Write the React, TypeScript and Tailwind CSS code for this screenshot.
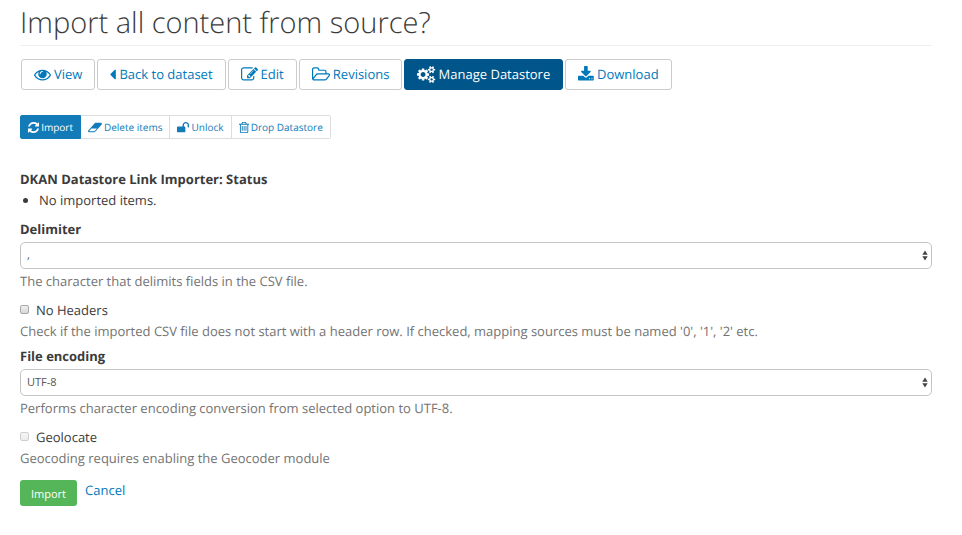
import type { ReactNode } from "react";

const icons = {
  eye: {
    box: "0 0 1792 1792",
    d: "M1664 960q-152-236-381-353 61 104 61 225 0 185-131.5 316.5t-316.5 131.5-316.5-131.5-131.5-316.5q0-121 61-225-229 117-381 353 133 205 333.5 326.5t434.5 121.5 434.5-121.5 333.5-326.5zm-720-384q0-20-14-34t-34-14q-125 0-214.5 89.5t-89.5 214.5q0 20 14 34t34 14 34-14 14-34q0-86 61-147t147-61q20 0 34-14t14-34zm848 384q0 34-20 69-140 230-376.5 368.5t-499.5 138.5-499.5-139-376.5-368q-20-35-20-69t20-69q140-229 376.5-368t499.5-139 499.5 139 376.5 368q20 35 20 69z",
  },
  caret: {
    box: "600 0 640 1792",
    d: "M1216 448v896q0 26-19 45t-45 19-45-19l-448-448q-19-19-19-45t19-45l448-448q19-19 45-19t45 19 19 45z",
  },
  edit: {
    box: "0 0 1792 1792",
    d: "M888 1184l116-116-152-152-116 116v56h96v96h56zm440-720q-16-16-33 1l-350 350q-17 17-1 33t33-1l350-350q17-17 1-33zm80 594v190q0 119-84.5 203.5t-203.5 84.5h-832q-119 0-203.5-84.5t-84.5-203.5v-832q0-119 84.5-203.5t203.5-84.5h832q63 0 117 25 15 7 18 23 3 17-9 29l-49 49q-14 14-32 8-23-6-45-6h-832q-66 0-113 47t-47 113v832q0 66 47 113t113 47h832q66 0 113-47t47-113v-126q0-13 9-22l64-64q15-15 35-7t20 29zm-96-738l288 288-672 672h-288v-288zm444 132l-92 92-288-288 92-92q28-28 68-28t68 28l152 152q28 28 28 68t-28 68z",
  },
  folder: {
    box: "-64 0 1920 1792",
    d: "M1717 931q0-35-53-35h-1088q-40 0-85.5 21.5t-71.5 52.5l-294 363q-18 24-18 40 0 35 53 35h1088q40 0 86-22t71-53l294-363q18-22 18-39zm-1141-163h768v-160q0-40-28-68t-68-28h-576q-40 0-68-28t-28-68v-64q0-40-28-68t-68-28h-320q-40 0-68 28t-28 68v853l256-315q44-53 116-87.5t140-34.5zm1269 163q0 62-46 120l-295 363q-43 53-116 87.5t-140 34.5h-1088q-92 0-158-66t-66-158v-960q0-92 66-158t158-66h320q92 0 158 66t66 158v32h544q92 0 158 66t66 158v160h192q54 0 99 24.5t67 70.5q15 32 15 68z",
  },
  cogs: {
    box: "0 0 1920 1792",
    d: "M896 896q0-106-75-181t-181-75-181 75-75 181 75 181 181 75 181-75 75-181zm768 512q0-52-38-90t-90-38-90 38-38 90q0 53 37.5 90.5t90.5 37.5 90.5-37.5 37.5-90.5zm0-1024q0-52-38-90t-90-38-90 38-38 90q0 53 37.5 90.5t90.5 37.5 90.5-37.5 37.5-90.5zm-384 421v185q0 10-7 19.5t-16 10.5l-155 24q-11 35-32 76 34 48 90 115 7 11 7 20 0 12-7 19-23 30-82.5 89.5t-78.5 59.5q-11 0-21-7l-115-90q-37 19-77 31-11 108-23 155-7 24-30 24h-186q-11 0-20-7.5t-10-17.5l-23-153q-34-10-75-31l-118 89q-7 7-20 7-11 0-21-8-144-133-144-160 0-9 7-19 10-14 41-53t47-61q-23-44-35-82l-152-24q-10-1-17-9.5t-7-19.5v-185q0-10 7-19.5t16-10.5l155-24q11-35 32-76-34-48-90-115-7-11-7-20 0-12 7-20 22-30 82-89t79-59q11 0 21 7l115 90q34-18 77-32 11-108 23-154 7-24 30-24h186q11 0 20 7.5t10 17.5l23 153q34 10 75 31l118-89q8-7 20-7 11 0 21 8 144 133 144 160 0 8-7 19-12 16-42 54t-45 60q23 48 34 82l152 23q10 2 17 10.5t7 19.5zm640 533v140q0 16-149 31-12 27-30 52 51 113 51 138 0 4-4 7-122 71-124 71-8 0-46-47t-52-68q-20 2-30 2t-30-2q-14 21-52 68t-46 47q-2 0-124-71-4-3-4-7 0-25 51-138-18-25-30-52-149-15-149-31v-140q0-16 149-31 13-29 30-52-51-113-51-138 0-4 4-7 4-2 35-20t59-34 30-16q8 0 46 46.5t52 67.5q20-2 30-2t30 2q51-71 92-112l6-2q4 0 124 70 4 3 4 7 0 25-51 138 17 23 30 52 149 15 149 31zm0-1024v140q0 16-149 31-12 27-30 52 51 113 51 138 0 4-4 7-122 71-124 71-8 0-46-47t-52-68q-20 2-30 2t-30-2q-14 21-52 68t-46 47q-2 0-124-71-4-3-4-7 0-25 51-138-18-25-30-52-149-15-149-31v-140q0-16 149-31 13-29 30-52-51-113-51-138 0-4 4-7 4-2 35-20t59-34 30-16q8 0 46 46.5t52 67.5q20-2 30-2t30 2q51-71 92-112l6-2q4 0 124 70 4 3 4 7 0 25-51 138 17 23 30 52 149 15 149 31z",
  },
  download: {
    box: "64 0 1664 1792",
    d: "M1344 1344q0-26-19-45t-45-19-45 19-19 45 19 45 45 19 45-19 19-45zm256 0q0-26-19-45t-45-19-45 19-19 45 19 45 45 19 45-19 19-45zm128-224v320q0 40-28 68t-68 28h-1472q-40 0-68-28t-28-68v-320q0-40 28-68t68-28h465l135 136q58 56 136 56t136-56l136-136h464q40 0 68 28t28 68zm-325-569q17 41-14 70l-448 448q-18 19-45 19t-45-19l-448-448q-31-29-14-70 17-39 59-39h256v-448q0-26 19-45t45-19h256q26 0 45 19t19 45v448h256q42 0 59 39z",
  },
  refresh: {
    box: "128 0 1536 1792",
    d: "M1639 1056q0 5-1 7-64 268-268 434.5t-478 166.5q-146 0-282.5-55t-243.5-157l-129 129q-19 19-45 19t-45-19-19-45v-448q0-26 19-45t45-19h448q26 0 45 19t19 45-19 45l-137 137q71 66 161 102t187 36q134 0 250-65t186-179q11-17 53-117 8-23 30-23h192q13 0 22.5 9.5t9.5 22.5zm25-800v448q0 26-19 45t-45 19h-448q-26 0-45-19t-19-45 19-45l138-138q-148-137-349-137-134 0-250 65t-186 179q-11 17-53 117-8 23-30 23h-199q-13 0-22.5-9.5t-9.5-22.5v-7q65-268 270-434.5t480-166.5q146 0 284 55.5t245 156.5l130-129q19-19 45-19t45 19 19 45z",
  },
  eraser: {
    box: "-64 0 1920 1792",
    d: "M832 1408l336-384h-768l-336 384h768zm1013-1077q15 34 9.5 71.5t-30.5 65.5l-896 1024q-38 44-96 44h-768q-38 0-69.5-20.5t-47.5-54.5q-15-34-9.5-71.5t30.5-65.5l896-1024q38-44 96-44h768q38 0 69.5 20.5t47.5 54.5z",
  },
  unlock: {
    box: "64 0 1664 1792",
    d: "M1728 576v256q0 26-19 45t-45 19h-64q-26 0-45-19t-19-45v-256q0-106-75-181t-181-75-181 75-75 181v192h96q40 0 68 28t28 68v576q0 40-28 68t-68 28h-960q-40 0-68-28t-28-68v-576q0-40 28-68t68-28h672v-192q0-185 131.5-316.5t316.5-131.5 316.5 131.5 131.5 316.5z",
  },
  trash: {
    box: "192 0 1408 1792",
    d: "M704 736v576q0 14-9 23t-23 9h-64q-14 0-23-9t-9-23v-576q0-14 9-23t23-9h64q14 0 23 9t9 23zm256 0v576q0 14-9 23t-23 9h-64q-14 0-23-9t-9-23v-576q0-14 9-23t23-9h64q14 0 23 9t9 23zm256 0v576q0 14-9 23t-23 9h-64q-14 0-23-9t-9-23v-576q0-14 9-23t23-9h64q14 0 23 9t9 23zm128 724v-948h-896v948q0 22 7 40.5t14.5 27 10.5 8.5h832q3 0 10.5-8.5t14.5-27 7-40.5zm-672-1076h448l-48-117q-7-9-17-11h-317q-10 2-17 11zm928 32v64q0 14-9 23t-23 9h-96v948q0 83-47 143.5t-113 60.5h-832q-66 0-113-58.5t-47-141.5v-952h-96q-14 0-23-9t-9-23v-64q0-14 9-23t23-9h309l70-167q15-37 54-63t79-26h320q40 0 79 26t54 63l70 167h309q14 0 23 9t9 23z",
  },
};

type IconName = keyof typeof icons;

function Icon({ name, size }: { name: IconName; size: string }) {
  return (
    <svg viewBox={icons[name].box} className={`${size} w-auto shrink-0 fill-current`} aria-hidden="true">
      <path d={icons[name].d} />
    </svg>
  );
}

const primaryTabs: { icon: IconName; label: string; active?: boolean }[] = [
  { icon: "eye", label: "View" },
  { icon: "caret", label: "Back to dataset" },
  { icon: "edit", label: "Edit" },
  { icon: "folder", label: "Revisions" },
  { icon: "cogs", label: "Manage Datastore", active: true },
  { icon: "download", label: "Download" },
];

const secondaryTabs: { icon: IconName; label: string; active?: boolean }[] = [
  { icon: "refresh", label: "Import", active: true },
  { icon: "eraser", label: "Delete items" },
  { icon: "unlock", label: "Unlock" },
  { icon: "trash", label: "Drop Datastore" },
];

function Help({ id, children }: { id: string; children: ReactNode }) {
  return (
    <p id={id} className="text-[#737373]">
      {children}
    </p>
  );
}

function SelectField({ id, label, options, help }: { id: string; label: string; options: string[]; help: string }) {
  return (
    <div>
      <label htmlFor={id} className="block font-bold">
        {label}
      </label>
      <div className="relative my-[2px]">
        <select
          id={id}
          aria-describedby={`${id}-help`}
          className="block h-[27px] w-full appearance-none rounded-[5px] border border-[#c4c4c4] bg-white px-1.5 pb-[2px] text-[11px] text-[#555]"
        >
          {options.map((option) => (
            <option key={option}>{option}</option>
          ))}
        </select>
        <svg
          viewBox="0 0 6 11"
          className="pointer-events-none absolute top-2 right-1 h-[11px] w-1.5 fill-[#444]"
          aria-hidden="true"
        >
          <path d="M3 0.5l2.7 4.2H0.3zM3 10.5L0.3 6.3h5.4z" />
        </svg>
      </div>
      <Help id={`${id}-help`}>{help}</Help>
    </div>
  );
}

function CheckField({ id, label, help, disabled }: { id: string; label: string; help: string; disabled?: boolean }) {
  return (
    <div className="mt-2">
      <div className="flex gap-[7px]">
        <input
          id={id}
          type="checkbox"
          disabled={disabled}
          aria-describedby={`${id}-help`}
          className="mt-[5px] size-[9px] appearance-none rounded-[2px] border border-[#a8a8a8] bg-linear-to-b from-[#f0f0f0] to-[#d8d8d8] checked:bg-[#0079ba] disabled:border-[#cfcfcf] disabled:from-[#f6f6f6] disabled:to-[#ebebeb]"
        />
        <label htmlFor={id}>{label}</label>
      </div>
      <Help id={`${id}-help`}>{help}</Help>
    </div>
  );
}

export default function App() {
  return (
    <main className="mr-[30px] ml-5 pt-[5px] font-['Open_Sans',sans-serif] text-[13px] leading-[21px] text-[#3b3b3b] [text-rendering:geometricPrecision]">
      <h1 className="border-b border-[#eee] pb-1 text-[29px] leading-9 font-light">Import all content from source?</h1>

      <nav aria-label="Primary tabs" className="mt-[13px] ml-px flex flex-wrap gap-[2px]">
        {primaryTabs.map((tab) => (
          <a
            key={tab.label}
            href="#"
            aria-current={tab.active ? "page" : undefined}
            className={`flex h-[31px] items-center gap-[3px] rounded-[3px] border px-3 ${
              tab.active ? "border-[#00568a] bg-[#00568a] text-white" : "border-[#ccc] bg-white text-[#0079ba]"
            }`}
          >
            <Icon name={tab.icon} size="h-[17px]" />
            {tab.label}
          </a>
        ))}
      </nav>

      <nav aria-label="Datastore actions" className="mt-[25px] flex">
        {secondaryTabs.map((tab) => (
          <a
            key={tab.label}
            href="#"
            aria-current={tab.active ? "page" : undefined}
            className={`flex h-6 items-center gap-[2px] border-y border-r px-[7px] text-[10px] first:rounded-l-[2px] first:border-l last:rounded-r-[2px] ${
              tab.active ? "border-[#127bb8] bg-[#127bb8] text-white" : "border-[#ddd] bg-white text-[#127bb8]"
            }`}
          >
            <Icon name={tab.icon} size="h-[13px]" />
            {tab.label}
          </a>
        ))}
      </nav>

      <section className="mt-[30px]">
        <h2 className="font-bold">DKAN Datastore Link Importer: Status</h2>
        <ul className="list-disc pl-[19px]">
          <li>No imported items.</li>
        </ul>
      </section>

      <form className="mt-2" onSubmit={(event) => event.preventDefault()}>
        <SelectField
          id="delimiter"
          label="Delimiter"
          options={[",", ";", "TAB", "|", "+"]}
          help="The character that delimits fields in the CSV file."
        />
        <CheckField
          id="no-headers"
          label="No Headers"
          help="Check if the imported CSV file does not start with a header row. If checked, mapping sources must be named '0', '1', '2' etc."
        />
        <div className="mt-1">
          <SelectField
            id="encoding"
            label="File encoding"
            options={["UTF-8"]}
            help="Performs character encoding conversion from selected option to UTF-8."
          />
        </div>
        <CheckField id="geolocate" label="Geolocate" help="Geocoding requires enabling the Geocoder module" disabled />
        <div className="mt-[11px] flex gap-2">
          <button type="submit" className="h-[26px] rounded-[3px] bg-[#55b559] px-[11px] text-[11px] text-white">
            Import
          </button>
          <a href="#" className="text-[#0079ba]">
            Cancel
          </a>
        </div>
      </form>
    </main>
  );
}
